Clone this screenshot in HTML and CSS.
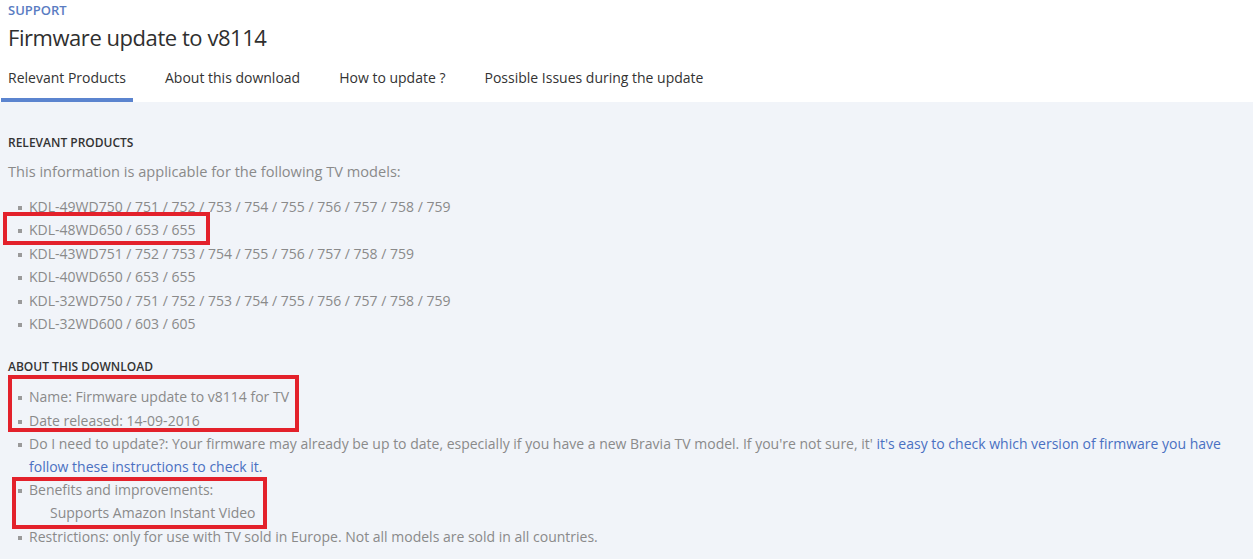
FILE: index.html
```html
<!DOCTYPE html>
<html>
<head>
<meta charset="utf-8">
<link rel="stylesheet" href="styles.css">
</head>
<body>
<div class="page">
  <header class="head">
    <div class="eyebrow">SUPPORT</div>
    <h1 class="title">Firmware update to v8114</h1>
    <nav class="tabs">
      <span class="tab active">Relevant Products</span>
      <span class="tab">About this download</span>
      <span class="tab">How to update ?</span>
      <span class="tab">Possible Issues during the update</span>
    </nav>
  </header>
  <main class="panel">
    <h2 class="sec">RELEVANT PRODUCTS</h2>
    <p class="intro">This information is applicable for the following TV models:</p>
    <ul class="list">
      <li>KDL-49WD750 / 751 / 752 / 753 / 754 / 755 / 756 / 757 / 758 / 759</li>
      <li>KDL-48WD650 / 653 / 655</li>
      <li>KDL-43WD751 / 752 / 753 / 754 / 755 / 756 / 757 / 758 / 759</li>
      <li>KDL-40WD650 / 653 / 655</li>
      <li>KDL-32WD750 / 751 / 752 / 753 / 754 / 755 / 756 / 757 / 758 / 759</li>
      <li>KDL-32WD600 / 603 / 605</li>
    </ul>
    <h2 class="sec sec2">ABOUT THIS DOWNLOAD</h2>
    <ul class="list list2">
      <li>Name: Firmware update to v8114 for TV</li>
      <li>Date released: 14-09-2016</li>
      <li>Do I need to update?: Your firmware may already be up to date, especially if you have a new Bravia TV model. If you're not sure, it' <a class="link">it's easy to check which version of firmware you have<br>follow these instructions to check it.</a></li>
      <li>Benefits and improvements:<div class="sub">Supports Amazon Instant Video</div></li>
      <li>Restrictions: only for use with TV sold in Europe. Not all models are sold in all countries.</li>
    </ul>
  </main>
  <div class="mark m1"></div>
  <div class="mark m2"></div>
  <div class="mark m3"></div>
</div>
</body>
</html>
```
FILE: styles.css
```css
html, body { margin: 0; padding: 0; }
body {
  font-family: "Open Sans", "Noto Sans", sans-serif;
  background: #ffffff;
  color: #333;
  width: 1253px;
  height: 559px;
  overflow: hidden;
}
.page { position: relative; height: 559px; }
.eyebrow {
  font-size: 13px;
  font-weight: 600;
  color: #5a7cc2;
  padding: 2px 0 0 8px;
  line-height: 16px;
}
.title {
  margin: 4px 0 0 8px;
  font-size: 22px;
  font-weight: 400;
  color: #2f2f2f;
  line-height: 30px;
  letter-spacing: -0.45px;
}
.tabs {
  display: flex;
  margin-top: 16px;
  padding-left: 1px;
}
.tab {
  font-size: 14px;
  color: #333;
  padding: 0 7px 11px 7px;
  margin-right: 25px;
  line-height: 19px;
  border-bottom: 4px solid transparent;
}
.tab.active { border-bottom-color: #5b84cf; }
.panel {
  background: #f1f4f9;
  height: 460px;
  padding: 1px 8px 0 8px;
}
.sec {
  margin: 32px 0 0 0;
  font-size: 12px;
  font-weight: 600;
  color: #333;
  line-height: 16px;
}
.sec2 { margin-top: 24px; }
.intro {
  margin: 11px 0 0 0;
  font-size: 14.6px;
  color: #8a8a8a;
  line-height: 19px;
}
.list {
  list-style: none;
  margin: 14px 0 0 0;
  padding: 0;
  font-size: 14px;
  color: #8a8a8a;
  line-height: 23.4px;
}
.list2 { margin-top: 10px; line-height: 23.2px; }
.list li {
  position: relative;
  padding-left: 21px;
}
.list li::before {
  content: "";
  position: absolute;
  left: 10px;
  top: 11px;
  width: 4px;
  height: 4px;
  background: #9a9a9a;
}
.link { color: #4a70c2; }
.sub { padding-left: 21px; }
.mark {
  position: absolute;
  border: 4px solid #e3212b;
}
.m1 { left: 3px; top: 212px; width: 199px; height: 25px; }
.m2 { left: 8px; top: 375px; width: 283px; height: 49px; }
.m3 { left: 12px; top: 477px; width: 247px; height: 44px; }
```
